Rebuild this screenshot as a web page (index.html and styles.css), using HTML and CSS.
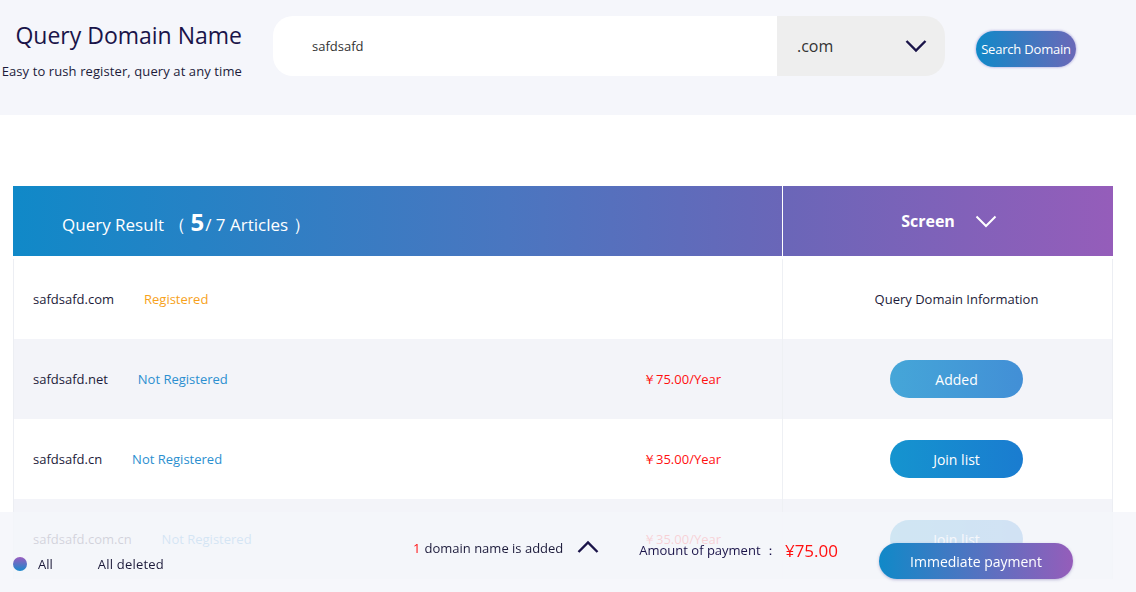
FILE: index.html
```html
<!DOCTYPE html>
<html lang="en">
<head>
<meta charset="utf-8">
<title>Query Domain Name</title>
<link rel="stylesheet" href="styles.css">
</head>
<body>
<header class="top">
  <div class="brand">
    <h1 class="brand-title">Query Domain Name</h1>
    <p class="brand-sub">Easy to rush register, query at any time</p>
  </div>
  <div class="search">
    <div class="search-input">safdsafd</div>
    <div class="search-select">
      <span>.com</span>
      <svg class="chev-down" width="22" height="14" viewBox="0 0 22 14"><path d="M1.5 2 L11 11.5 L20.5 2" fill="none" stroke="#1a1449" stroke-width="2.4"/></svg>
    </div>
  </div>
  <button class="search-btn">Search Domain</button>
</header>

<main class="result">
  <div class="thead">
    <div class="th-main">Query Result <span class="paren">（</span><b class="count">5</b>/ 7 Articles <span class="paren">）</span></div>
    <div class="th-side">Screen
      <svg class="chev-white" width="22" height="13" viewBox="0 0 22 13"><path d="M1.5 1.5 L11 11 L20.5 1.5" fill="none" stroke="#fff" stroke-width="2"/></svg>
    </div>
  </div>
  <div class="tbody">
    <div class="row">
      <div class="cell-main"><span class="domain">safdsafd.com</span><span class="status reg">Registered</span></div>
      <div class="cell-side"><span class="info">Query Domain Information</span></div>
    </div>
    <div class="row alt">
      <div class="cell-main"><span class="domain">safdsafd.net</span><span class="status">Not Registered</span><span class="price">￥75.00/Year</span></div>
      <div class="cell-side"><button class="pill added">Added</button></div>
    </div>
    <div class="row">
      <div class="cell-main"><span class="domain">safdsafd.cn</span><span class="status">Not Registered</span><span class="price">￥35.00/Year</span></div>
      <div class="cell-side"><button class="pill join">Join list</button></div>
    </div>
    <div class="row alt">
      <div class="cell-main"><span class="domain">safdsafd.com.cn</span><span class="status">Not Registered</span><span class="price">￥35.00/Year</span></div>
      <div class="cell-side"><button class="pill join">Join list</button></div>
    </div>
  </div>
</main>

<footer class="paybar">
  <div class="pay-left">
    <span class="dot"></span>
    <span class="pay-all">All</span>
    <span class="pay-del">All deleted</span>
  </div>
  <div class="pay-right">
    <div class="added-info"><span class="red">1</span> domain name is added
      <svg class="chev-up" width="22" height="14" viewBox="0 0 22 14"><path d="M1.5 12 L11 2.5 L20.5 12" fill="none" stroke="#1a1449" stroke-width="2.4"/></svg>
    </div>
    <div class="amount">Amount of payment ：<span class="total">¥75.00</span></div>
    <button class="pay-btn">Immediate payment</button>
  </div>
</footer>
</body>
</html>
```

FILE: styles.css
```css
* { box-sizing: border-box; }
html, body { margin: 0; padding: 0; }
body {
  background: #fff;
  font-family: "Open Sans", "Noto Sans", "Liberation Sans", sans-serif;
  color: #1c1b3a;
  width: 1136px;
  overflow: hidden;
}
button { font-family: inherit; border: 0; cursor: pointer; }

/* top header */
.top {
  height: 115px;
  background: #f5f6fb;
  display: flex;
  align-items: flex-start;
  padding-top: 16px;
}
.brand {
  width: 242px;
  text-align: right;
  padding-top: 2px;
}
.brand-title {
  margin: 0;
  font-size: 23px;
  font-weight: 400;
  line-height: 34px;
  color: #1a1449;
}
.brand-sub {
  margin: 10px 0 0;
  font-size: 13px;
  line-height: 18px;
  color: #1c1b3a;
  letter-spacing: 0.1px;
}
.search {
  margin-left: 31px;
  width: 672px;
  height: 60px;
  border-radius: 20px;
  overflow: hidden;
  display: flex;
}
.search-input {
  width: 504px;
  background: #fff;
  padding-left: 39px;
  font-size: 13px;
  line-height: 60px;
  color: #333;
}
.search-select {
  flex: 1;
  background: #eeeeee;
  display: flex;
  align-items: center;
  padding-left: 20px;
  padding-right: 18px;
  font-size: 16px;
  color: #333;
}
.search-select span { flex: 1; }
.search-btn {
  margin-left: 31px;
  margin-top: 15px;
  width: 100px;
  height: 36px;
  border-radius: 18px;
  background: linear-gradient(90deg, #1089c8, #6a68b8);
  color: #fff;
  font-size: 13px;
  padding: 0;
  white-space: nowrap;
  letter-spacing: -0.2px;
  box-shadow: 0 0 2px 1px rgba(120, 110, 200, 0.35);
}

/* result table */
.result {
  margin: 71px 0 0 13px;
  width: 1100px;
}
.thead {
  height: 70px;
  display: flex;
  background: linear-gradient(90deg, #1089c8 0%, #4a76c0 45%, #6a66b8 70%, #955dba 100%);
  color: #fff;
}
.th-main {
  width: 770px;
  border-right: 1px solid #fff;
  padding-left: 49px;
  display: flex;
  align-items: center;
  font-size: 17px;
  padding-top: 6px;
  white-space: pre;
}
.th-main .paren { font-size: 18px; }
.th-main .count {
  font-size: 24px;
  font-weight: 700;
  margin: -6px 1px 0 4px;
}
.th-side {
  flex: 1;
  display: flex;
  align-items: center;
  justify-content: center;
  gap: 20px;
  font-size: 16px;
  font-weight: 700;
  padding-left: 2px;
}
.tbody {
  margin-top: 3px;
  border-left: 1px solid #eceef3;
  border-right: 1px solid #eceef3;
}
.row {
  height: 80px;
  display: flex;
  background: #fff;
}
.row.alt { background: #f3f4f9; }
.cell-main {
  width: 769px;
  border-right: 1px solid #eef0f4;
  display: flex;
  align-items: center;
  padding-left: 19px;
  font-size: 13px;
}
.domain { color: #1c1b3a; }
.status { margin-left: 30px; color: #2b8fd0; }
.status.reg { color: #f7a21b; }
.price {
  margin-left: auto;
  width: 139px;
  color: #ff1010;
}
.cell-side {
  flex: 1;
  display: flex;
  align-items: center;
  justify-content: center;
  padding-left: 18px;
  font-size: 13px;
}
.info { color: #1c1b3a; }
.pill {
  width: 133px;
  height: 38px;
  border-radius: 19px;
  color: #fff;
  font-size: 14px;
}
.pill.added { background: linear-gradient(90deg, #45a6d8, #428fd6); }
.pill.join { background: linear-gradient(90deg, #1594cf, #1a7cd0); }

/* bottom pay bar */
.paybar {
  position: fixed;
  left: 0;
  right: 0;
  bottom: 0;
  height: 80px;
  background: rgba(244, 245, 250, 0.84);
  display: flex;
  align-items: flex-start;
  padding: 0 63px 0 13px;
  font-size: 13px;
}
.pay-left {
  margin-top: 44px;
  display: flex;
  align-items: center;
  height: 16px;
}
.dot {
  width: 14px;
  height: 14px;
  border-radius: 50%;
  background: linear-gradient(180deg, #9a5cbf, #1a8acc);
}
.pay-all { margin-left: 11px; }
.pay-del { margin-left: 45px; letter-spacing: 0.2px; }
.pay-right {
  margin-left: auto;
  display: flex;
  align-items: flex-start;
}
.added-info {
  margin-top: 26px;
  display: flex;
  align-items: center;
  height: 20px;
}
.red { color: #ff1010; margin-right: 4px; }
.chev-up { margin-left: 14px; margin-top: -2px; }
.amount {
  margin-left: 40px;
  margin-top: 27px;
  display: flex;
  align-items: center;
  height: 22px;
  color: #1a1449;
}
.total {
  margin-left: 8px;
  color: #ff1010;
  font-size: 17px;
}
.pay-btn {
  margin-left: 41px;
  margin-top: 31px;
  width: 194px;
  height: 36px;
  border-radius: 18px;
  background: linear-gradient(90deg, #1089c8, #955dba);
  color: #fff;
  font-size: 14px;
  box-shadow: 0 1px 3px rgba(80, 70, 150, 0.35);
}
```
